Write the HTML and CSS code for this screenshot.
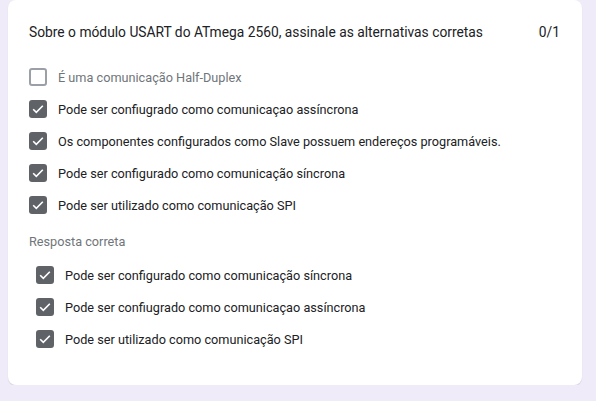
FILE: index.html
```html
<!DOCTYPE html>
<html lang="pt">
<head>
<meta charset="utf-8">
<link rel="stylesheet" href="styles.css">
</head>
<body>
<div class="card">
  <div class="head">
    <div class="title">Sobre o módulo USART do ATmega 2560, assinale as alternativas corretas</div>
    <div class="score">0/1</div>
  </div>
  <div class="opts">
    <div class="opt muted"><span class="box"></span><span>É uma comunicação Half-Duplex</span></div>
    <div class="opt"><span class="box on"><svg viewBox="0 0 18 18"><path d="M4.2 9.3l3.1 3.1 6.5-6.6"/></svg></span><span>Pode ser confiugrado como comunicaçao assíncrona</span></div>
    <div class="opt"><span class="box on"><svg viewBox="0 0 18 18"><path d="M4.2 9.3l3.1 3.1 6.5-6.6"/></svg></span><span>Os componentes configurados como Slave possuem endereços programáveis.</span></div>
    <div class="opt"><span class="box on"><svg viewBox="0 0 18 18"><path d="M4.2 9.3l3.1 3.1 6.5-6.6"/></svg></span><span>Pode ser configurado como comunicação síncrona</span></div>
    <div class="opt"><span class="box on"><svg viewBox="0 0 18 18"><path d="M4.2 9.3l3.1 3.1 6.5-6.6"/></svg></span><span>Pode ser utilizado como comunicação SPI</span></div>
  </div>
  <div class="answer-label">Resposta correta</div>
  <div class="opts answer">
    <div class="opt"><span class="box on"><svg viewBox="0 0 18 18"><path d="M4.2 9.3l3.1 3.1 6.5-6.6"/></svg></span><span>Pode ser configurado como comunicação síncrona</span></div>
    <div class="opt"><span class="box on"><svg viewBox="0 0 18 18"><path d="M4.2 9.3l3.1 3.1 6.5-6.6"/></svg></span><span>Pode ser confiugrado como comunicaçao assíncrona</span></div>
    <div class="opt"><span class="box on"><svg viewBox="0 0 18 18"><path d="M4.2 9.3l3.1 3.1 6.5-6.6"/></svg></span><span>Pode ser utilizado como comunicação SPI</span></div>
  </div>
</div>
</body>
</html>
```
FILE: styles.css
```css
html, body {
  margin: 0;
  padding: 0;
  background: #f0ebf8;
  font-family: Roboto, "Liberation Sans", Arial, sans-serif;
  color: #202124;
}
.card {
  margin: 0 0 0 8px;
  width: 574px;
  height: 385px;
  box-sizing: border-box;
  background: #fff;
  border-radius: 8px;
  box-shadow: 0 1px 1px rgba(0,0,0,0.12);
  padding: 22px 21px 0 21px;
}
.head {
  display: flex;
  justify-content: space-between;
  align-items: flex-start;
  font-size: 13.8px;
  line-height: 20px;
}
.score { margin-right: 1px; }
.opts {
  margin-top: 19px;
  display: flex;
  flex-direction: column;
}
.opt {
  display: flex;
  align-items: center;
  gap: 11px;
  height: 32px;
  font-size: 12.7px;
}
.opt.muted { color: #70757a; }
.box {
  width: 18px;
  height: 18px;
  box-sizing: border-box;
  border: 2px solid #9aa0a6;
  border-radius: 3px;
  flex: none;
  display: flex;
}
.box.on {
  background: #5f6368;
  border-color: #5f6368;
  border-width: 0;
}
.box svg {
  width: 18px;
  height: 18px;
}
.box svg path {
  fill: none;
  stroke: #fff;
  stroke-width: 1.6;
}
.answer-label {
  margin-top: 13px;
  font-size: 12.7px;
  color: #70757a;
}
.answer {
  margin-top: 10px;
  padding-left: 7px;
}
```
